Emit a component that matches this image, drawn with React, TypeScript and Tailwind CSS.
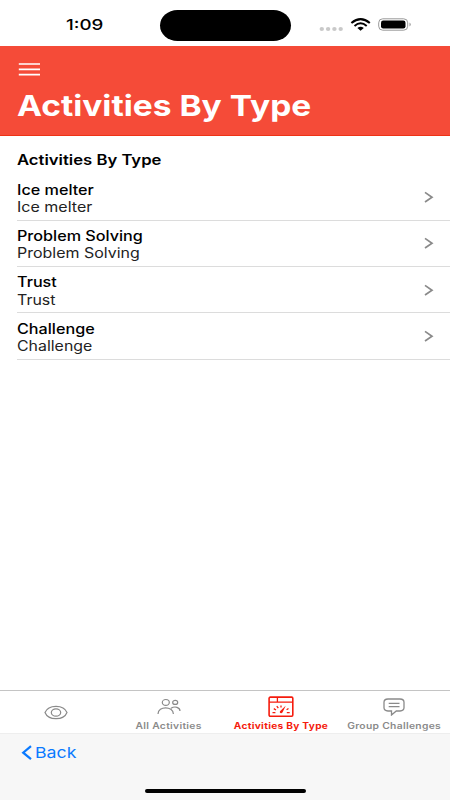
import { clsx } from 'clsx'
import { PropsWithChildren, ReactNode } from 'react'

interface ITextProps extends PropsWithChildren {
  className?: string
}

const Text = ({ className, children }: ITextProps) => {
  return (
    <span className={clsx('block w-max origin-left whitespace-nowrap', className)}>
      {children}
    </span>
  )
}

const activityTypes = [
  { title: 'Ice melter', subScale: 'scale-x-[1.145]' },
  { title: 'Problem Solving', subScale: 'scale-x-[1.14]' },
  { title: 'Trust', subScale: 'scale-x-[1.14]' },
  { title: 'Challenge', subScale: 'scale-x-[1.135]' },
]

const StatusBar = () => {
  return (
    <div className="flex h-[46.3px] shrink-0 items-start">
      <div className="w-[159.5px] pt-[15.4px] pl-[65.5px]">
        <Text className="scale-x-[1.25] text-[15px] leading-5 font-medium">1:09</Text>
      </div>
      <div className="mt-[9.5px] h-[31.5px] w-[131px] rounded-[18px/16px] bg-black" />
      <svg className="mt-[16px] ml-[28px]" width="94" height="18" viewBox="0 0 94 18" fill="none">
        <g fill="#c9c9c9">
          <ellipse cx="2.8" cy="13" rx="2.2" ry="2" />
          <ellipse cx="9.1" cy="13" rx="2.2" ry="2" />
          <ellipse cx="15.4" cy="13" rx="2.2" ry="2" />
          <ellipse cx="21.7" cy="13" rx="2.2" ry="2" />
        </g>
        <g stroke="#000" strokeWidth="2">
          <path d="M32.4 7 Q41.6 -0.8 50.8 7" />
          <path d="M35.5 9.9 Q41.6 4.7 47.7 9.9" />
        </g>
        <path d="M38.4 12 Q41.6 9.4 44.8 12 L41.6 14.7Z" fill="#000" />
        <rect x="59.7" y="2.8" width="29" height="11.4" rx="4" stroke="#999" />
        <rect x="62" y="4.6" width="24.5" height="7.9" rx="2.2" fill="#000" />
        <path d="M90.5 6.5 Q93.1 8.5 90.5 10.5Z" fill="#999" />
      </svg>
    </div>
  )
}

const Header = () => {
  return (
    <header className="h-[89.9px] shrink-0 border-b border-[#ee3215] bg-[#f54b38] pl-[16.5px] text-white">
      <svg className="mt-[16px] ml-[1.5px]" width="23" height="15" viewBox="0 0 23 15">
        <path d="M.8 2H22M.8 7.4H22M.8 12.6H22" stroke="currentColor" strokeWidth="1.7" />
      </svg>
      <Text className="mt-[11px] scale-x-[1.155] text-[29px] leading-9 font-bold">
        Activities By Type
      </Text>
    </header>
  )
}

const ActivityRow = ({ title, subScale }: (typeof activityTypes)[number]) => {
  return (
    <li className="flex h-[46.35px] items-center justify-between border-b border-[#dcdcdc] pr-[16px]">
      <div className="pt-[2px] leading-[17.3px]">
        <Text className="scale-x-[1.155] text-[14px] font-medium">{title}</Text>
        <Text className={clsx('text-[14px] text-[#222]', subScale)}>{title}</Text>
      </div>
      <svg width="10" height="12" viewBox="0 0 10 12" fill="none">
        <path d="M1 1.4L8 6.2L1 11" stroke="#8a8a8a" strokeWidth="1.7" />
      </svg>
    </li>
  )
}

const EyeIcon = () => (
  <svg width="24" height="16" viewBox="0 0 24 16" fill="none" stroke="currentColor" strokeWidth="1.2">
    <path d="M1 7.5C2.5 3.8 7 1.3 12 1.3S21.5 3.8 23 7.5C21.5 11.2 17 13.7 12 13.7S2.5 11.2 1 7.5Z" />
    <ellipse cx="12" cy="7.5" rx="4.7" ry="3.7" />
  </svg>
)

const PeopleIcon = () => (
  <svg width="24" height="18" viewBox="0 0 24 18" fill="none" stroke="currentColor" strokeWidth="1.2">
    <ellipse cx="8.8" cy="4.4" rx="3.5" ry="2.9" />
    <ellipse cx="18.2" cy="4.4" rx="2.5" ry="2" />
    <path d="M1 16C1.2 7.7 16 7.7 16.4 16M14 10.3C18 7.7 23 9.4 23 13" />
  </svg>
)

const GaugeIcon = () => (
  <svg width="26" height="22" viewBox="0 0 26 22" fill="none" stroke="currentColor">
    <rect x="1.1" y="1.1" width="23.7" height="19.2" rx="1.2" strokeWidth="1.6" />
    <path d="M1 6.2H25M9.4 1V6" strokeWidth="1.3" />
    <path
      d="M4.5 16.6H7.4M18.8 16.6H21.7M5.8 12.6L8 14M8.8 10.2L10.3 12.2M13 9.4V11.6M20.5 12.5L18.6 13.8"
      strokeWidth="1.3"
    />
    <path d="M17.7 9.8L14.6 16.2C13.7 18 11.1 17.2 12 15.3Z" fill="currentColor" stroke="none" />
  </svg>
)

const ChatIcon = () => (
  <svg width="22" height="18" viewBox="0 0 22 18" fill="none" stroke="currentColor" strokeWidth="1.3">
    <path d="M5 1H17Q21 1.2 21 4.2V9.8Q21 12.8 17 13H13.3L8.5 17V13H5Q1 12.8 1 9.8V4.2Q1 1.2 5 1Z" />
    <path d="M5.7 5.3H16.5M5.7 8.7H16.5" />
  </svg>
)

interface ITabProps {
  icon: ReactNode
  label?: string
  isActive?: boolean
  iconClass: string
}

const tabs: ITabProps[] = [
  { icon: <EyeIcon />, iconClass: 'pt-[13.5px]' },
  { icon: <PeopleIcon />, label: 'All Activities', iconClass: 'h-[29px] pt-[7px]' },
  {
    icon: <GaugeIcon />,
    label: 'Activities By Type',
    isActive: true,
    iconClass: 'h-[29px] pt-[5px]',
  },
  { icon: <ChatIcon />, label: 'Group Challenges', iconClass: 'h-[29px] pt-[7px]' },
]

const Tab = ({ icon, label, isActive, iconClass }: ITabProps) => {
  return (
    <div
      className={clsx(
        'flex flex-1 flex-col items-center',
        isActive ? 'text-[#f51c0e]' : 'text-[#8a8a8a]',
      )}
    >
      <div className={iconClass}>{icon}</div>
      {label && (
        <span
          className={clsx(
            'text-[8.6px] leading-3 tracking-[0.25px] whitespace-nowrap',
            isActive ? 'scale-x-[1.18] font-bold' : 'scale-x-[1.2] font-semibold',
          )}
        >
          {label}
        </span>
      )}
    </div>
  )
}

const BottomBar = () => {
  return (
    <div className="flex h-[67.5px] shrink-0 flex-col justify-between border-t border-[#eeeeee] bg-[#f7f7f7]">
      <button className="flex items-center gap-[1.5px] pt-[11px] pl-[21px] text-[#0a7aff]">
        <svg width="12" height="16" viewBox="0 0 12 16" fill="none">
          <path d="M10 1.2L2.2 7.7L10 14.2" stroke="currentColor" strokeWidth="2.2" />
        </svg>
        <Text className="scale-x-[1.18] text-[15px] leading-4">Back</Text>
      </button>
      <div className="mb-[7px] h-[4.3px] w-[161px] self-center rounded-full bg-black" />
    </div>
  )
}

export default function App() {
  return (
    <div className="flex h-[800px] w-[450px] flex-col overflow-hidden bg-white font-[Inter,sans-serif] text-black">
      <StatusBar />
      <Header />
      <main className="flex-1 pl-[17px]">
        <Text className="mt-[14.5px] mb-[5.5px] scale-x-[1.19] text-[14px] leading-[18px] font-semibold">
          Activities By Type
        </Text>
        <ul>
          {activityTypes.map((item) => (
            <ActivityRow key={item.title} {...item} />
          ))}
        </ul>
      </main>
      <nav className="flex h-[42.5px] shrink-0 border-t border-[#c4c4c4]">
        {tabs.map((tab, index) => (
          <Tab key={index} {...tab} />
        ))}
      </nav>
      <BottomBar />
    </div>
  )
}
